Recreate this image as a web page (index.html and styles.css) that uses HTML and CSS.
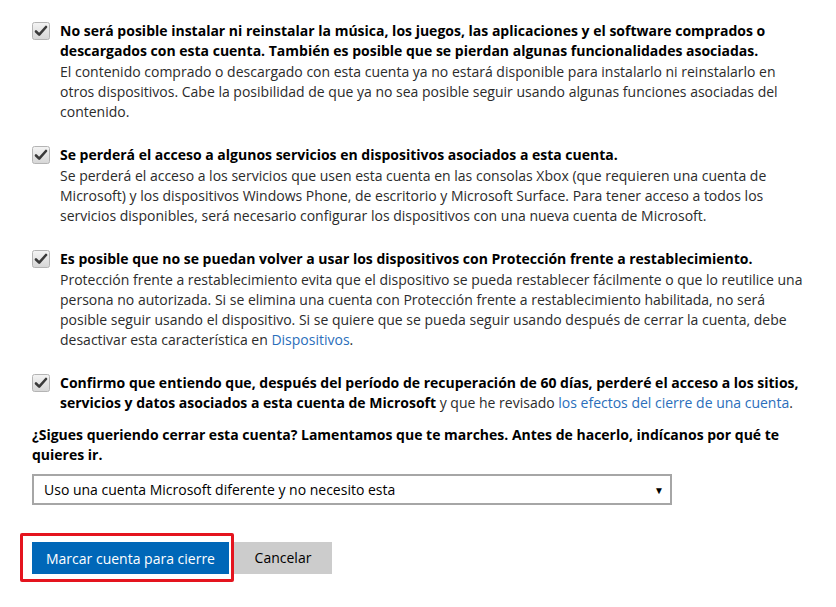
FILE: index.html
```html
<!DOCTYPE html>
<html lang="es">
<head>
<meta charset="utf-8">
<link rel="stylesheet" href="styles.css">
<title>Cerrar cuenta</title>
</head>
<body>
<main class="page">
  <div class="item">
    <span class="check"><svg width="18" height="18" viewBox="0 0 18 18"><defs><linearGradient id="g1" x1="0" y1="0" x2="0" y2="1"><stop offset="0" stop-color="#f4f4f4"/><stop offset="1" stop-color="#d6d6d6"/></linearGradient></defs><rect x="0.5" y="0.5" width="17" height="17" rx="2" fill="url(#g1)" stroke="#b4b4b4"/><path d="M4 9.5 L7.2 12.6 L14 5" fill="none" stroke="#3a3a3a" stroke-width="2.6" stroke-linecap="round" stroke-linejoin="round"/></svg></span>
    <div class="text">
      <p class="title">No será posible instalar ni reinstalar la música, los juegos, las aplicaciones y el software comprados o descargados con esta cuenta. También es posible que se pierdan algunas funcionalidades asociadas.</p>
      <p class="desc">El contenido comprado o descargado con esta cuenta ya no estará disponible para instalarlo ni reinstalarlo en otros dispositivos. Cabe la posibilidad de que ya no sea posible seguir usando algunas funciones asociadas del contenido.</p>
    </div>
  </div>
  <div class="item">
    <span class="check"><svg width="18" height="18" viewBox="0 0 18 18"><defs><linearGradient id="g2" x1="0" y1="0" x2="0" y2="1"><stop offset="0" stop-color="#f4f4f4"/><stop offset="1" stop-color="#d6d6d6"/></linearGradient></defs><rect x="0.5" y="0.5" width="17" height="17" rx="2" fill="url(#g2)" stroke="#b4b4b4"/><path d="M4 9.5 L7.2 12.6 L14 5" fill="none" stroke="#3a3a3a" stroke-width="2.6" stroke-linecap="round" stroke-linejoin="round"/></svg></span>
    <div class="text">
      <p class="title">Se perderá el acceso a algunos servicios en dispositivos asociados a esta cuenta.</p>
      <p class="desc">Se perderá el acceso a los servicios que usen esta cuenta en las consolas Xbox (que requieren una cuenta de Microsoft) y los dispositivos Windows Phone, de escritorio y Microsoft Surface. Para tener acceso a todos los servicios disponibles, será necesario configurar los dispositivos con una nueva cuenta de Microsoft.</p>
    </div>
  </div>
  <div class="item">
    <span class="check"><svg width="18" height="18" viewBox="0 0 18 18"><defs><linearGradient id="g3" x1="0" y1="0" x2="0" y2="1"><stop offset="0" stop-color="#f4f4f4"/><stop offset="1" stop-color="#d6d6d6"/></linearGradient></defs><rect x="0.5" y="0.5" width="17" height="17" rx="2" fill="url(#g3)" stroke="#b4b4b4"/><path d="M4 9.5 L7.2 12.6 L14 5" fill="none" stroke="#3a3a3a" stroke-width="2.6" stroke-linecap="round" stroke-linejoin="round"/></svg></span>
    <div class="text">
      <p class="title">Es posible que no se puedan volver a usar los dispositivos con Protección frente a restablecimiento.</p>
      <p class="desc">Protección frente a restablecimiento evita que el dispositivo se pueda restablecer fácilmente o que lo reutilice una persona no autorizada. Si se elimina una cuenta con Protección frente a restablecimiento habilitada, no será posible seguir usando el dispositivo. Si se quiere que se pueda seguir usando después de cerrar la cuenta, debe desactivar esta característica en <a href="#">Dispositivos</a>.</p>
    </div>
  </div>
  <div class="item last">
    <span class="check"><svg width="18" height="18" viewBox="0 0 18 18"><defs><linearGradient id="g4" x1="0" y1="0" x2="0" y2="1"><stop offset="0" stop-color="#f4f4f4"/><stop offset="1" stop-color="#d6d6d6"/></linearGradient></defs><rect x="0.5" y="0.5" width="17" height="17" rx="2" fill="url(#g4)" stroke="#b4b4b4"/><path d="M4 9.5 L7.2 12.6 L14 5" fill="none" stroke="#3a3a3a" stroke-width="2.6" stroke-linecap="round" stroke-linejoin="round"/></svg></span>
    <div class="text">
      <p class="confirm"><strong>Confirmo que entiendo que, después del período de recuperación de 60 días, perderé el acceso a los sitios, servicios y datos asociados a esta cuenta de Microsoft</strong> y que he revisado <a href="#">los efectos del cierre de una cuenta</a>.</p>
    </div>
  </div>
  <p class="question">¿Sigues queriendo cerrar esta cuenta? Lamentamos que te marches. Antes de hacerlo, indícanos por qué te quieres ir.</p>
  <div class="select">
    <span>Uso una cuenta Microsoft diferente y no necesito esta</span>
    <span class="arrow">▼</span>
  </div>
  <div class="actions">
    <div class="highlight"><button class="primary">Marcar cuenta para cierre</button></div>
    <button class="secondary">Cancelar</button>
  </div>
</main>
</body>
</html>
```

FILE: styles.css
```css
html, body {
  margin: 0;
  padding: 0;
  background: #fff;
}
body {
  font-family: "Open Sans", "Noto Sans", sans-serif;
  font-size: 14px;
  line-height: 20px;
  color: #2b2b2b;
}
.page {
  padding: 21px 0 0 32px;
  width: 790px;
}
p { margin: 0; }
.item {
  display: flex;
  gap: 10px;
  margin-bottom: 23px;
}
.item.last { margin-bottom: 12px; }
.check {
  flex: 0 0 18px;
  height: 18px;
  margin-top: 1px;
}
.check svg { display: block; }
.text {
  width: 746px;
}
.desc { margin-top: 1px; }
.title, strong {
  font-weight: 700;
  color: #000;
}
a {
  color: #2a6ebb;
  text-decoration: none;
}
.question {
  font-weight: 700;
  color: #000;
  margin-bottom: 9px;
}
.select {
  width: 640px;
  height: 31px;
  box-sizing: border-box;
  border: 2px solid #a6a6a6;
  display: flex;
  align-items: center;
  justify-content: space-between;
  padding: 0 6px 0 10px;
  color: #000;
}
.arrow {
  font-size: 10px;
  color: #000;
}
.actions {
  display: flex;
  align-items: center;
  margin-top: 28px;
  margin-left: -12px;
}
.highlight {
  border: 3px solid #e4141e;
  border-radius: 2px;
  padding: 6px 2px 5px 9px;
}
button {
  font-family: inherit;
  font-size: 14px;
  border: 0;
  height: 32px;
  padding: 0;
  cursor: pointer;
}
.primary {
  background: #0067b8;
  color: #fff;
  width: 197px;
  display: block;
}
.secondary {
  background: #cccccc;
  color: #000;
  width: 98px;
}
```
